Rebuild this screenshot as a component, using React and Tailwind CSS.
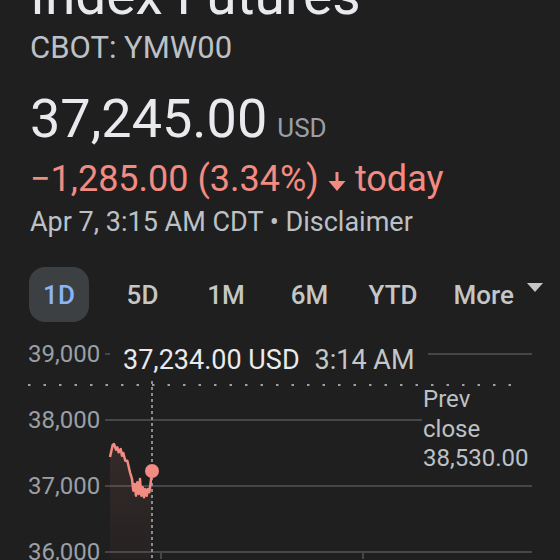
import React from "react";

const pts = [
  [110, 128], [112.7, 116], [114, 115], [116, 120.7], [117.3, 118.3], [118.7, 123.3],
  [120.7, 120], [122, 126.7], [123.3, 124], [125.3, 131.7], [127.3, 131.7], [130, 143.3],
  [132, 150], [133.3, 161.7], [134.7, 155], [136, 166.7], [137.3, 153.3], [138.7, 165],
  [140, 150], [141.3, 166.7], [142.7, 158.3], [144, 168.3], [145.3, 160], [146.7, 166.7],
  [148, 160], [149.3, 163.3], [150.7, 153.3], [152, 142],
];

function Chart() {
  const line = pts.map((p, i) => `${i ? "L" : "M"}${p[0]} ${p[1]}`).join(" ");
  const fill = `${line} L152 230 L110 230 Z`;
  return (
    <div className="relative h-[230px] w-[560px] mt-[7px]">
      <svg className="absolute left-0 top-0" width="560" height="230" viewBox="0 0 560 230">
        <defs>
          <linearGradient id="g" x1="0" y1="0" x2="0" y2="1">
            <stop offset="0" stopColor="#f28b82" stopOpacity="0.1" />
            <stop offset="1" stopColor="#f28b82" stopOpacity="0.03" />
          </linearGradient>
        </defs>
        <g stroke="#464646" strokeWidth="2">
          <line x1="105" y1="25" x2="110" y2="25" />
          <line x1="428" y1="25" x2="532" y2="25" />
          <line x1="105" y1="91" x2="422" y2="91" />
          <line x1="105" y1="157" x2="532" y2="157" />
          <line x1="105" y1="223" x2="532" y2="223" />
          <line x1="161" y1="223" x2="161" y2="230" />
          <line x1="363" y1="223" x2="363" y2="230" />
        </g>
        <path d={fill} fill="url(#g)" />
        <line x1="28" y1="56" x2="522" y2="56" stroke="#9aa0a6" strokeWidth="2" strokeDasharray="2.5 13" />
        <line x1="152" y1="52" x2="152" y2="230" stroke="#8a8d91" strokeWidth="2" strokeDasharray="3 3" />
        <path d={line} fill="none" stroke="#f28b82" strokeWidth="2.5" strokeLinejoin="round" />
        <circle cx="152" cy="142" r="7" fill="#f28b82" />
      </svg>
      <div className="absolute left-[28px] top-[13px] text-[24px] leading-[24px] text-[#9aa0a6]">39,000</div>
      <div className="absolute left-[28px] top-[79px] text-[24px] leading-[24px] text-[#9aa0a6]">38,000</div>
      <div className="absolute left-[28px] top-[145px] text-[24px] leading-[24px] text-[#9aa0a6]">37,000</div>
      <div className="absolute left-[28px] top-[211px] text-[24px] leading-[24px] text-[#9aa0a6]">36,000</div>
      <div className="absolute left-[123px] top-[15px] flex text-[27px] leading-[32px] whitespace-nowrap">
        <span className="text-[#e8eaed]">37,234.00 USD</span>
        <span className="ml-[15px] text-[#c4c7c5]">3:14 AM</span>
      </div>
      <div className="absolute left-[423px] top-[56px] text-[24px] leading-[29.5px] text-[#bdc1c6]">
        <div>Prev</div>
        <div>close</div>
        <div>38,530.00</div>
      </div>
    </div>
  );
}

function Tab({ label, active }) {
  return (
    <div
      className={
        "w-[60px] h-[55px] flex items-center justify-center rounded-[16px] text-[26px] font-medium leading-[30px] " +
        (active ? "bg-[#3c4043] text-[#8ab4f8]" : "text-[#c4c7c5]")
      }
    >
      {label}
    </div>
  );
}

export default function App() {
  return (
    <div className="w-[560px] h-[560px] overflow-hidden bg-[#1f1f1f] font-['Roboto',sans-serif]">
      <div className="pl-[30px]">
        <div className="-mt-[32px] text-[55px] leading-[54px] text-[#e8eaed] whitespace-nowrap">Index Futures</div>
        <div className="mt-[8px] text-[31px] leading-[36px] text-[#bdc1c6]">CBOT: YMW00</div>
        <div className="mt-[23px] flex items-baseline leading-[60px]">
          <span className="text-[54px] text-[#e8eaed]">37,245.00</span>
          <span className="ml-[10px] text-[26px] text-[#9aa0a6]">USD</span>
        </div>
        <div className="mt-[1px] flex items-center text-[36px] leading-[40px] text-[#f28b82] whitespace-nowrap">
          <span>−1,285.00 (3.34%)</span>
          <svg className="ml-[8px] mt-[4px]" width="20" height="21" viewBox="0 0 20 21">
            <rect x="8.5" y="1" width="3" height="11" fill="#f28b82" />
            <path d="M1.5 10 L18.5 10 L10 20 Z" fill="#f28b82" />
          </svg>
          <span className="ml-[8px]">today</span>
        </div>
        <div className="mt-[5px] text-[27px] leading-[36px] text-[#bdc1c6] whitespace-nowrap">
          Apr 7, 3:15 AM CDT • Disclaimer
        </div>
      </div>
      <div className="mt-[27px] pl-[29px] flex items-center gap-[23.5px]">
        <Tab label="1D" active />
        <Tab label="5D" />
        <Tab label="1M" />
        <Tab label="6M" />
        <Tab label="YTD" />
        <div className="h-[55px] pl-[7px] flex items-center text-[26px] font-medium leading-[30px] text-[#c4c7c5]">
          <span>More</span>
          <svg className="ml-[13px] mb-[15px]" width="16" height="9" viewBox="0 0 16 9">
            <path d="M0 0 L16 0 L8 9 Z" fill="#c4c7c5" />
          </svg>
        </div>
      </div>
      <Chart />
    </div>
  );
}
